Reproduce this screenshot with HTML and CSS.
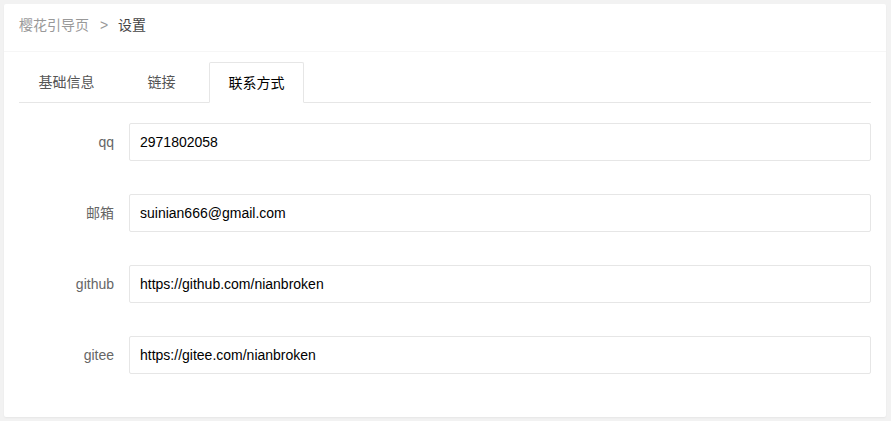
FILE: index.html
```html
<!DOCTYPE html>
<html lang="zh-CN">
<head>
    <meta charset="UTF-8">
    <title>设置</title>
    <link rel="stylesheet" href="styles.css">
</head>
<body>
    <div class="card">
        <div class="card-header">
            <span class="breadcrumb">
                <a href="#">樱花引导页</a>
                <span class="separator">&gt;</span>
                <a href="#"><cite>设置</cite></a>
            </span>
        </div>
        <div class="card-body">
            <div class="tab">
                <ul class="tab-title">
                    <li>基础信息</li>
                    <li>链接</li>
                    <li class="tab-this">联系方式</li>
                </ul>
                <div class="tab-content">
                    <form class="form">
                        <div class="form-item">
                            <label class="form-label">qq</label>
                            <div class="input-block">
                                <input type="text" class="input" value="2971802058">
                            </div>
                        </div>
                        <div class="form-item">
                            <label class="form-label">邮箱</label>
                            <div class="input-block">
                                <input type="text" class="input" value="suinian666@gmail.com">
                            </div>
                        </div>
                        <div class="form-item">
                            <label class="form-label">github</label>
                            <div class="input-block">
                                <input type="text" class="input" value="https://github.com/nianbroken">
                            </div>
                        </div>
                        <div class="form-item">
                            <label class="form-label">gitee</label>
                            <div class="input-block">
                                <input type="text" class="input" value="https://gitee.com/nianbroken">
                            </div>
                        </div>
                    </form>
                </div>
            </div>
        </div>
    </div>
</body>
</html>
```

FILE: styles.css
```css
* {
    box-sizing: border-box;
}

body {
    margin: 0;
    padding: 4px 5px 4px 4px;
    background-color: #f2f2f2;
    font-family: "Liberation Sans", "Noto Sans CJK SC", sans-serif;
    font-size: 14px;
    color: #333;
}

.card {
    height: 413px;
    background-color: #fff;
    border-radius: 2px;
    box-shadow: 0 1px 2px 0 rgba(0, 0, 0, 0.05);
}

.card-header {
    height: 48px;
    padding: 0 15px 6px;
    line-height: 42px;
    border-bottom: 1px solid #f6f6f6;
}

.breadcrumb a {
    color: #999;
    text-decoration: none;
}

.breadcrumb cite {
    font-style: normal;
    color: #444;
}

.breadcrumb .separator {
    margin: 0 6px 0 7px;
    color: #999;
}

.card-body {
    padding: 10px 15px;
}

.tab-title {
    display: flex;
    margin: 0;
    padding: 0;
    height: 41px;
    list-style: none;
    border-bottom: 1px solid #e6e6e6;
}

.tab-title li {
    min-width: 95px;
    padding: 0 15px;
    line-height: 40px;
    text-align: center;
    color: #555;
}

.tab-title .tab-this {
    height: 41px;
    color: #000;
    background-color: #fff;
    border: 1px solid #e6e6e6;
    border-bottom-color: #fff;
    border-radius: 2px 2px 0 0;
}

.tab-content {
    padding: 20px 0 0;
}

.form {
    display: flex;
    flex-direction: column;
    gap: 33px;
    margin: 0;
}

.form-item {
    display: flex;
}

.form-label {
    width: 110px;
    padding: 9px 15px;
    line-height: 20px;
    text-align: right;
    color: #666;
}

.input-block {
    flex: 1;
}

.input {
    width: 100%;
    height: 38px;
    padding: 0 10px;
    border: 1px solid #e6e6e6;
    border-radius: 2px;
    font-family: inherit;
    font-size: 14px;
    color: #000;
    background-color: #fff;
    outline: none;
}
```
